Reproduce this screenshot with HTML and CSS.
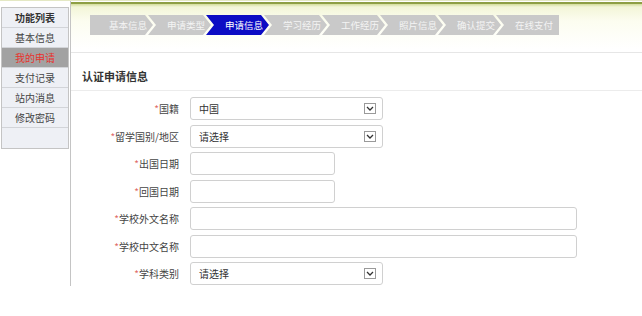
FILE: index.html
```html
<!DOCTYPE html>
<html lang="zh-CN">
<head>
    <meta charset="UTF-8">
    <title>认证申请信息</title>
    <link rel="stylesheet" href="styles.css">
</head>
<body>
    <div class="page">
        <div class="sidebar">
            <div class="side-title">功能列表</div>
            <div class="side-item">基本信息</div>
            <div class="side-item active">我的申请</div>
            <div class="side-item">支付记录</div>
            <div class="side-item">站内消息</div>
            <div class="side-item">修改密码</div>
            <div class="side-item"></div>
        </div>

        <div class="main">
            <div class="topbar">
                <div class="steps">
                    <div class="step first">基本信息</div>
                    <div class="step">申请类型</div>
                    <div class="step current">申请信息</div>
                    <div class="step">学习经历</div>
                    <div class="step">工作经历</div>
                    <div class="step">照片信息</div>
                    <div class="step">确认提交</div>
                    <div class="step last">在线支付</div>
                </div>
            </div>

            <h2 class="section-title">认证申请信息</h2>

            <div class="form">
                <label class="label"><em>*</em>国籍</label>
                <div class="select"><span>中国</span><svg class="arrow" width="12" height="11" viewBox="0 0 12 11"><rect x="0.5" y="0.5" width="11" height="10" fill="#fff" stroke="#9a9a9a"/><path d="M3 4 L6 7 L9 4" fill="none" stroke="#333" stroke-width="1.3"/></svg></div>

                <label class="label"><em>*</em>留学国别/地区</label>
                <div class="select"><span>请选择</span><svg class="arrow" width="12" height="11" viewBox="0 0 12 11"><rect x="0.5" y="0.5" width="11" height="10" fill="#fff" stroke="#9a9a9a"/><path d="M3 4 L6 7 L9 4" fill="none" stroke="#333" stroke-width="1.3"/></svg></div>

                <label class="label"><em>*</em>出国日期</label>
                <input class="input short" type="text">

                <label class="label"><em>*</em>回国日期</label>
                <input class="input short" type="text">

                <label class="label"><em>*</em>学校外文名称</label>
                <input class="input wide" type="text">

                <label class="label"><em>*</em>学校中文名称</label>
                <input class="input wide" type="text">

                <label class="label"><em>*</em>学科类别</label>
                <div class="select"><span>请选择</span><svg class="arrow" width="12" height="11" viewBox="0 0 12 11"><rect x="0.5" y="0.5" width="11" height="10" fill="#fff" stroke="#9a9a9a"/><path d="M3 4 L6 7 L9 4" fill="none" stroke="#333" stroke-width="1.3"/></svg></div>
            </div>
        </div>
    </div>
</body>
</html>
```

FILE: styles.css
```css
* {
    margin: 0;
    padding: 0;
    box-sizing: border-box;
}

body {
    font-family: "Noto Sans CJK SC", "Noto Sans", sans-serif;
    background: #fff;
    color: #333;
    border-top: 1px solid #e4e8c4;
}

.page {
    display: flex;
    align-items: flex-start;
}

/* left menu */
.sidebar {
    width: 68px;
    margin: 6px 1px 0 1px;
    border: 1px solid #c4c4c4;
    background: #eef0f5;
}

.side-title,
.side-item {
    height: 20px;
    line-height: 19px;
    font-size: 10px;
    text-align: center;
    border-bottom: 1px solid #d2d4d8;
}

.side-item:last-child {
    border-bottom: none;
}

.side-title {
    font-weight: bold;
    color: #333;
}

.side-item {
    color: #444;
}

.side-item.active {
    background: #a2a2a2;
    color: #e8322d;
}

/* main panel */
.main {
    flex: 1;
    height: 285px;
    border-left: 1px solid #c4c4c4;
}

.topbar {
    height: 52px;
    padding: 14px 0 0 19px;
    border-bottom: 1px solid #e6e6e6;
    background: linear-gradient(to bottom, #fff 0, #fff 1px, #8e9f44 1px, #8e9f44 3px, #d3dc9c 3px, #f3f6d8 6px, #fcfdf0 20px, #fff 48px);
}

.steps {
    display: flex;
}

.step {
    width: 63px;
    height: 20px;
    margin-left: -5px;
    padding-left: 19px;
    line-height: 20px;
    font-size: 9.5px;
    color: #f4f4f4;
    background: #c9c9c9;
    white-space: nowrap;
    clip-path: polygon(0 0, calc(100% - 8px) 0, 100% 50%, calc(100% - 8px) 100%, 0 100%, 8px 50%);
}

.step.first {
    margin-left: 0;
    clip-path: polygon(0 0, calc(100% - 8px) 0, 100% 50%, calc(100% - 8px) 100%, 0 100%);
}

.step.last {
    clip-path: polygon(0 0, 100% 0, 100% 100%, 0 100%, 8px 50%);
}

.step.current {
    background: #0c0cc4;
    color: #fff;
}

.section-title {
    height: 38px;
    padding: 16px 0 0 11px;
    font-size: 11px;
    line-height: 14px;
    font-weight: bold;
    color: #333;
    border-bottom: 1px solid #ececec;
}

/* form grid */
.form {
    display: grid;
    grid-template-columns: 108px auto;
    column-gap: 11px;
    row-gap: 4.5px;
    padding-top: 6px;
    justify-items: start;
    align-items: center;
}

.label {
    justify-self: end;
    font-size: 10px;
    color: #444;
}

.label em {
    font-style: normal;
    color: #e06a6a;
}

.select,
.input {
    height: 23px;
    border: 1px solid #d0d0d0;
    border-radius: 3px;
    background: #fff;
    font-family: inherit;
    outline: none;
}

.select {
    width: 193px;
    display: flex;
    align-items: center;
    justify-content: space-between;
    padding: 0 6px 0 8px;
    font-size: 10px;
    color: #333;
}

.arrow {
    display: block;
}

.input.short {
    width: 145px;
}

.input.wide {
    width: 387px;
}
```
